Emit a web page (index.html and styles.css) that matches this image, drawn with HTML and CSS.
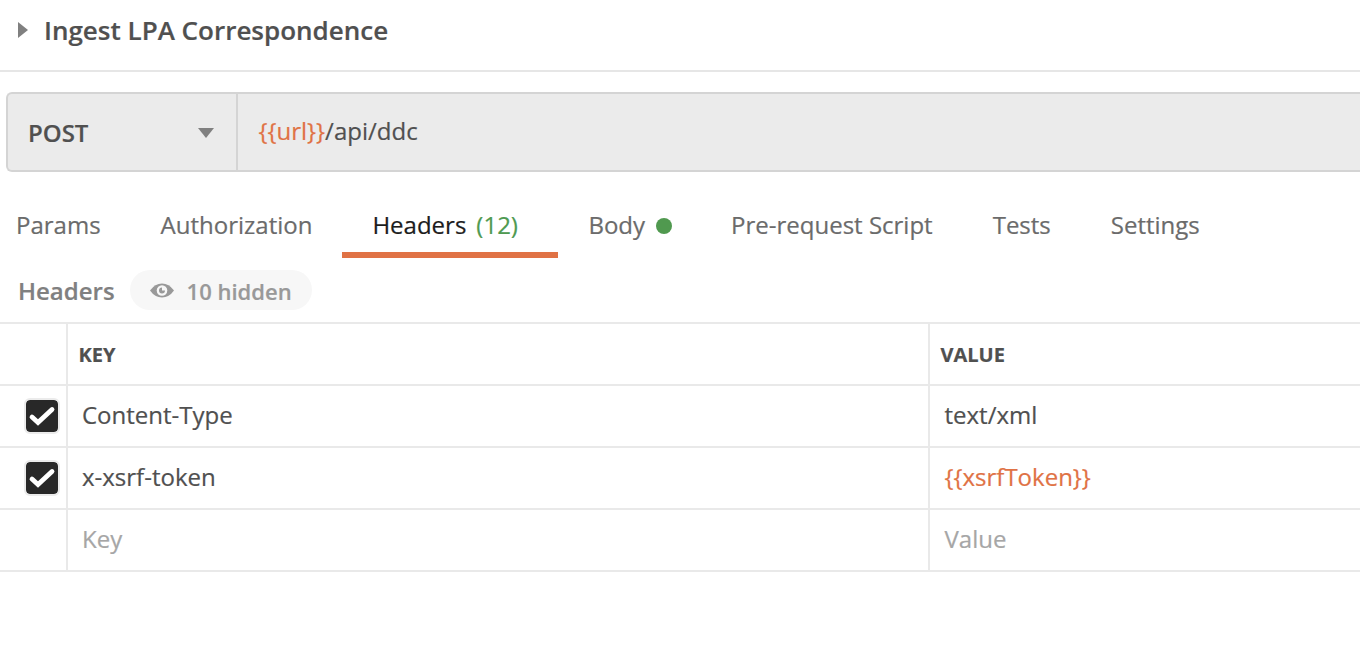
FILE: index.html
```html
<!DOCTYPE html>
<html lang="en">
<head>
<meta charset="utf-8">
<title>Ingest LPA Correspondence</title>
<link rel="stylesheet" href="styles.css">
</head>
<body>
<header class="title-bar">
  <svg class="caret" width="10" height="16" viewBox="0 0 10 16"><path d="M0 0L10 8L0 16Z" fill="#808080"/></svg>
  <h1 class="title">Ingest LPA Correspondence</h1>
</header>
<div class="request">
  <div class="method"><span class="method-name">POST</span><svg width="16" height="10" viewBox="0 0 16 10"><path d="M0 0H16L8 10Z" fill="#808080"/></svg></div>
  <div class="url"><span class="variable">{{url}}</span>/api/ddc</div>
</div>
<nav class="tabs">
  <div class="tab params"><span>Params</span></div>
  <div class="tab"><span>Authorization</span></div>
  <div class="tab active"><span>Headers</span><span class="count">(12)</span></div>
  <div class="tab body-tab"><span>Body</span><i class="dot"></i></div>
  <div class="tab"><span>Pre-request Script</span></div>
  <div class="tab"><span>Tests</span></div>
  <div class="tab"><span>Settings</span></div>
</nav>
<div class="subhead">
  <span class="label">Headers</span>
  <div class="pill">
    <svg width="24" height="16" viewBox="0 0 24 16"><path d="M0 7.500Q5 .5 12 .5T24 7.500Q19 14.500 12 14.500T0 7.500Z" fill="#999"/><circle cx="12" cy="7.500" r="5.300" fill="#f7f7f7"/><path d="M12 4.500A3 3 0 1 0 15 7.500H12Z" fill="#999"/></svg>
    <span class="hidden-count">10 hidden</span>
  </div>
</div>
<div class="table">
  <div class="cell"></div><div class="cell head">KEY</div><div class="cell head">VALUE</div>
  <div class="cell pick"><span class="check"><svg width="32" height="32" viewBox="0 0 32 32"><path d="M6 17L12 22.500L26 9.500" fill="none" stroke="#fff" stroke-width="4.800" stroke-linecap="round"/></svg></span></div><div class="cell">Content-Type</div><div class="cell value">text/xml</div>
  <div class="cell pick"><span class="check"><svg width="32" height="32" viewBox="0 0 32 32"><path d="M6 17L12 22.500L26 9.500" fill="none" stroke="#fff" stroke-width="4.800" stroke-linecap="round"/></svg></span></div><div class="cell">x-xsrf-token</div><div class="cell value"><span class="variable">{{xsrfToken}}</span></div>
  <div class="cell"></div><div class="cell placeholder">Key</div><div class="cell value placeholder">Value</div>
</div>
</body>
</html>
```
FILE: styles.css
```css
* { box-sizing: border-box; }
body { margin: 0; height: 650px; overflow: hidden; background: #fff; color: #505050; font: 24px/32px "Open Sans", sans-serif; white-space: nowrap; -webkit-text-stroke: .2px currentColor; }
svg { display: block; flex: none; }
.title-bar { height: 72px; padding: 0 0 10px 18px; display: flex; align-items: center; gap: 16px; border-bottom: 2px solid #e6e6e6; }
.title { margin: 0; font-size: 26px; line-height: 36px; font-weight: 600; }
.request { height: 80px; margin: 20px 0 0 6px; display: flex; border: 2px solid #d4d4d4; border-right: 0; border-radius: 6px 0 0 6px; background: #ebebeb; }
.method { width: 230px; padding: 2px 22px 0 20px; display: flex; align-items: center; justify-content: space-between; border-right: 2px solid #d4d4d4; font-weight: 600; }
.url { padding: 21px 20.5px; }
.variable { color: #e07245; }
.tabs { height: 86px; padding-top: 20px; display: flex; color: #6b6b6b; }
.tab { height: 66px; display: flex; align-items: center; padding: 0 30px; }
.params { padding-left: 16px; }
.active { width: 216px; padding: 6px 40px 0 30px; color: #1c1c1c; border-bottom: 6px solid #e07245; }
.count { margin-left: 10px; color: #4f9a51; }
.body-tab { padding-right: 29px; }
.dot { width: 16px; height: 16px; margin: 1px 0 0 11px; border-radius: 50%; background: #50994f; }
.subhead { height: 64px; padding: 12px 0 0 18px; display: flex; align-items: flex-start; gap: 15px; }
.label { margin-top: 5px; color: #808080; font-weight: 600; }
.pill { width: 182px; height: 40px; padding: 2px 20px 0; display: flex; align-items: center; gap: 13px; border-radius: 20px; background: #f7f7f7; color: #999; font-size: 22px; font-weight: 600; }
.table { display: grid; grid-template-columns: 68px 862px 1fr; grid-template-rows: repeat(4, 62px); border-top: 2px solid #e9e9e9; }
.cell { padding: 0 14px 2px; display: flex; align-items: center; border-right: 2px solid #e9e9e9; border-bottom: 2px solid #e9e9e9; }
.cell:nth-child(3n) { border-right: 0; }
.cell.head { padding: 2px 0 0 10.5px; font-size: 20px; font-weight: 700; }
.cell.pick { padding: 0 0 0 24px; }
.cell.value { padding-left: 14.5px; }
.check { width: 36px; height: 36px; flex: none; border: 2px solid #ebebeb; border-radius: 6px; background: #282828; background-clip: padding-box; }
.placeholder { color: #a6a6a6; }
```
